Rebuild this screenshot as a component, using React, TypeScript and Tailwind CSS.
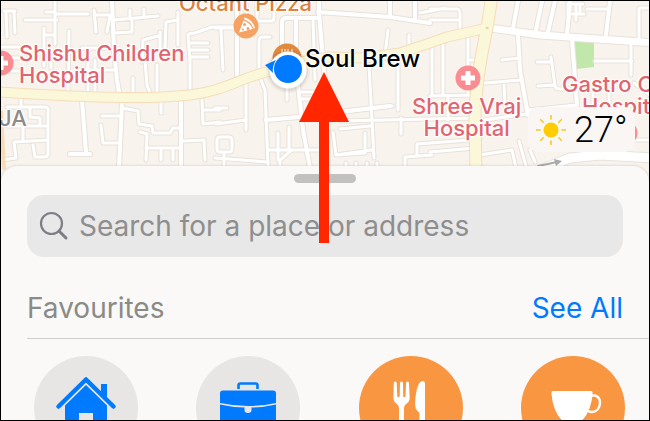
import type { ReactNode } from "react";

const minorRoads = [
  "M4 11H15M6 11L7 37M14 11L15 33M1 47H19M1 71H18M1 58H26",
  "M25 20H57M55 1V44M46 12H55M57 14H88M44 28V66M44 35H55M69 31L68 92M51 60V68",
  "M94 10L96 32M94 15H110L107 32M130 17V10M144 17V9M114 20L158 16M114 33L132 32V20",
  "M142 62L143 40L158 36M160 32V48M145 60L147 85L150 93M157 65V92M133 78V93",
  "M178 12V45M165 48L166 22L178 20M190 92V60L188 35Q188 33 195 33L212 27H237",
  "M190 43H208M190 50H208M190 57H208M80 70H116M88 62V93M95 93V60M82 48H104",
  "M21 98V105M30 108V117L40 118V126M7 107H45Q49 107 48 112V155Q47 157 45 157H35L33 145M8 126H46M23 127V140M48 140L14 142L16 158L1 160",
  "M102 116H122M120 143H103L101 125M122 108L138 111L139 124L152 126L153 133H170L173 128H181M140 132L147 134L146 160M146 148H180M161 149V160M173 149V160M161 100V113",
  "M183 141L204 140L205 160M202 100L203 124L220 122M203 110H220M217 140Q217 137 220 137H229Q232 137 232 140V149Q232 152 229 152H220Q217 152 217 149ZM224 152V166",
  "M215 28H237M221 30L223 70M246 78V130M257 3V18Q257 21 260 21H271Q274 21 274 18V3M246 18V3",
  "M270 37H262Q259 37 259 42V75L265 90L268 166M287 85V100M300 92H322M300 99H320M313 20L315 80",
  "M216 124L245 120M215 108H227M215 158L268 162M278 133V160M289 127V150M268 150H325M280 166V160L292 150",
  "M388 30L385 55M409 35V58M398 63V110M369 65L374 158M340 112L392 106M265 120L300 117",
  "M340 121L475 118M401 118V134M340 129L370 126M333 132L336 155L372 150M336 155L365 153V133",
  "M346 168V163M356 168V163M367 168V163M377 168V163M405 168V157L432 155M417 155V144L470 140",
  "M420 13L445 8M430 20H460M430 9H457Q460 9 460 14V30M443 40V95M432 45V95M468 37V92M468 60H478M430 96L475 95",
  "M572 4H583M572 14H584M576 4V20M587 9H608M568 14V3M639 40V8H650M580 4V14",
  "M502 60L520 58M484 83L522 80M504 85L505 105M484 120L527 114M595 61H632M631 44V75",
  "M537 62H552M551 57L555 86Q556 89 560 89L572 89M538 86L555 85M528 110L577 105M593 90V105M609 90V105M634 83L650 95",
  "M448 98V120M430 152L475 148M480 155L512 150L516 168M519 141L526 166M470 140L480 138M530 150L535 162M582 152V157M620 140H650",
];

const streets = [
  "M112 1L114 50L117 80L119 92M82 100L86 152M70 154H90M122 103L119 168M181 100V168",
  "M237 3V75M319 1V13L323 60L325 80M318 12L390 17L430 23M390 17V1M415 20V1",
  "M282 50V22Q282 18 286 18H318M296 20V50M298 85L303 130L310 168M266 120L320 115M340 112L390 106",
  "M518 1L513 28M542 1L536 30M555 1L548 32M570 3L567 34M610 1L606 35M518 35L520 70L528 115M572 40L577 105",
];

function RoadMap() {
  return (
    <svg
      viewBox="1 1 648 185"
      preserveAspectRatio="xMidYMin slice"
      className="block h-full w-full"
      fill="none"
      strokeLinecap="round"
      strokeLinejoin="round"
      aria-hidden="true"
    >
      <rect x="1" y="1" width="648" height="185" fill="#f8f3ec" />
      <path d="M574 40H594V67L576 69Z" fill="#c1e7ab" />
      <g stroke="#e7e2da">
        {minorRoads.map((d) => <path key={d} d={d} strokeWidth="5" />)}
        {streets.map((d) => <path key={d} d={d} strokeWidth="6" />)}
        <path d="M490 28L540 35L655 43" strokeWidth="9" />
        <path d="M540 170L570 158L600 155L655 158" strokeWidth="11" />
      </g>
      <g stroke="#fff">
        {minorRoads.map((d) => <path key={d} d={d} strokeWidth="3" />)}
        {streets.map((d) => <path key={d} d={d} strokeWidth="4" />)}
        <path d="M490 28L540 35L655 43" strokeWidth="7" />
        <path d="M540 170L570 158L600 155L655 158" strokeWidth="9" />
      </g>
      <g stroke="#f6dcb8">
        <path d="M-3 92C60 95 130 101 190 95C225 91 240 78 270 71L300 62L330 57L365 58L400 53L430 43L447 37L487 28" strokeWidth="11" />
        <path d="M492 -4L487 28C480 60 475 90 475 120L476 172" strokeWidth="13" />
        <path d="M1 112L4 168" strokeWidth="4" />
      </g>
      <g stroke="#fbf8da">
        <path d="M-3 92C60 95 130 101 190 95C225 91 240 78 270 71L300 62L330 57L365 58L400 53L430 43L447 37L487 28" strokeWidth="9" />
        <path d="M492 -4L487 28C480 60 475 90 475 120L476 172" strokeWidth="11" />
      </g>
      <circle cx="487" cy="28" r="1" stroke="#eccb9c" />
      <path d="M538 166L557 162" stroke="#aaa" strokeWidth="2" />
      <path d="M554 159L562 161L556 166Z" fill="#aaa" />
    </svg>
  );
}

function HospitalPin({ className }: { className: string }) {
  return (
    <svg viewBox="0 0 26 26" className={`absolute size-[26px] ${className}`} aria-hidden="true">
      <circle cx="13" cy="13" r="12.5" fill="#fb8c92" />
      <path d="M10.5 6h5v4.500h4.500v5h-4.500v4.500h-5v-4.500H6v-5h4.500z" fill="#fff" />
    </svg>
  );
}

const halo =
  "[text-shadow:0_0_2px_#fff,1px_1px_1px_#fff,-1px_-1px_1px_#fff,1px_-1px_1px_#fff,-1px_1px_1px_#fff]";

function MapLabel({ className, children }: { className: string; children: ReactNode }) {
  return (
    <p className={`absolute whitespace-nowrap text-[22px] leading-[22px] font-medium ${halo} ${className}`}>
      {children}
    </p>
  );
}

function Weather() {
  return (
    <div className="absolute top-[106px] right-[14px] flex h-[45px] w-[107px] items-center gap-2 rounded-[10px] bg-[#f9f6f3] pl-2">
      <svg viewBox="0 0 30 30" className="size-[30px] shrink-0" aria-hidden="true">
        <circle cx="15" cy="15" r="7.500" fill="#fc0" />
        <path
          d="M15 0.500V4M15 26V29.500M0.500 15H4M26 15H29.500M4.700 4.700L7.200 7.200M22.800 22.800L25.300 25.300M4.700 25.300L7.200 22.800M22.800 7.200L25.300 4.700"
          stroke="#fcc81c"
          strokeWidth="1.600"
          strokeLinecap="round"
        />
      </svg>
      <span className="font-[Roboto] text-[36px] leading-[44px] font-light text-black">27°</span>
    </div>
  );
}

function HomeIcon() {
  return (
    <svg viewBox="0 0 104 104" className="size-full" fill="#007aff" aria-hidden="true">
      <path d="M67 28h6v17l-6-6z" />
      <path d="M24.500 50.500L52 23.500L79.500 50.500" fill="none" stroke="#007aff" strokeWidth="4.500" strokeLinecap="round" strokeLinejoin="round" />
      <path d="M31 49.500L52 29L73 49.500V78H59V57H45V78H31z" />
    </svg>
  );
}

function BriefcaseIcon() {
  return (
    <svg viewBox="0 0 104 104" className="size-full" fill="#007aff" aria-hidden="true">
      <path d="M42.500 33V29.500Q42.500 27.500 44.500 27.500H59.500Q61.500 27.500 61.500 29.500V33" fill="none" stroke="#007aff" strokeWidth="2.600" />
      <path d="M27 34.500h50q3 0 3 3v9.500Q52 53 24 47v-9.500q0-3 3-3z" />
      <path d="M24 48.500Q36 51.300 48.500 51.600V54q0 3 3.500 3t3.500-3v-2.400Q68 51.300 80 48.500V74q0 3-3 3H27q-3 0-3-3z" />
    </svg>
  );
}

function ForkKnifeIcon() {
  return (
    <svg viewBox="0 0 104 104" className="size-full" fill="#fff" aria-hidden="true">
      <path d="M36.200 25.500q1.400 0 1.500 1.500l.6 13q.1 1.200 1.200 1.200t1.200-1.200L41 27q.1-1.500 1.500-1.500T44 27l.2 13q.1 1.200 1.200 1.200t1.100-1.200l.6-13q.1-1.500 1.400-1.500 1.400 0 1.500 1.500l.7 14.500q.1 4-3 6-2.700 1.700-2.700 4.500V80h-5V52q0-2.800-2.700-4.500-3-2-2.900-6L34.800 27q.1-1.500 1.400-1.500z" />
      <path d="M64 25q2 0 2 2.500V80h-5.500V58q0-1.500-2-3-2.500-2-2.300-6C56.500 37 58.500 25 64 25z" />
    </svg>
  );
}

function CupIcon() {
  return (
    <svg viewBox="0 0 104 104" className="size-full" fill="#fff" aria-hidden="true">
      <path d="M32 35h38q1.700 0 1.600 2-1 17.500-10.600 27.500Q56 69 51 69t-10-4.500Q31.500 54.500 30.400 37q-.1-2 1.600-2z" />
      <path d="M70 40.500Q72 39 74 39.500Q79 41 79 47Q78.500 55.500 71 56Q68.500 56 67 55" fill="none" stroke="#fff" strokeWidth="2.400" />
    </svg>
  );
}

const favourites = [
  { label: "Home", tone: "bg-[#e7e6e4]", icon: <HomeIcon /> },
  { label: "Work", tone: "bg-[#e7e6e4]", icon: <BriefcaseIcon /> },
  { label: "Restaurants", tone: "bg-[#f99642]", icon: <ForkKnifeIcon /> },
  { label: "Coffee", tone: "bg-[#f99642]", icon: <CupIcon /> },
];

export default function App() {
  return (
    <main className="relative h-screen w-full overflow-hidden border border-black bg-[#faf9f7] font-[Inter,sans-serif]">
      <section aria-label="Map" className="relative h-[185px] overflow-hidden">
        <RoadMap />
        <MapLabel className="-top-[9px] left-[178px] text-[#dd813c]">Octant Pizza</MapLabel>
        <MapLabel className="top-[41px] left-[18px] text-[#e0656f]">
          Shishu Children
          <br />
          Hospital
        </MapLabel>
        <MapLabel className="top-[106px] -left-[2px] text-[#8f8b88]">JA</MapLabel>
        <MapLabel className="top-[94px] left-[411px] text-center text-[#e0656f]">
          Shree Vraj
          <br />
          Hospital
        </MapLabel>
        <MapLabel className="top-[72px] left-[561px] text-[#e0656f]">
          Gastro C
          <br />
          <span className="pl-5">Hospital</span>
        </MapLabel>
        <HospitalPin className="top-[49px] -left-[13px]" />
        <HospitalPin className="top-[64px] left-[454px]" />
        <HospitalPin className="top-[119px] left-[611px]" />
        <svg viewBox="0 0 26 26" className="absolute top-[12px] left-[232px] size-[26px]" aria-hidden="true">
          <circle cx="13" cy="13" r="12.500" fill="#f6a263" />
          <path d="M11.500 4.500Q20 7 22 15L20.500 15.500Q18 8.500 11 6.300z" fill="#fff" />
          <path d="M10.500 7.500Q17 9.500 19.500 16L6 19.500z" fill="#fff" />
          <circle cx="11.500" cy="11.500" r="1.500" fill="#f6a263" />
          <circle cx="15" cy="15.500" r="1.500" fill="#f6a263" />
          <circle cx="10" cy="16.500" r="1" fill="#f6a263" />
        </svg>
        <svg viewBox="0 0 60 60" className="absolute top-[39px] left-[257px] size-[60px] overflow-visible" aria-hidden="true">
          <circle cx="29" cy="18" r="14.500" fill="#e08a40" />
          <path d="M24 9v5M27 9v5M30 9v5M34 9v5" stroke="#f8dcc0" strokeWidth="1.500" />
          <circle cx="30" cy="31" r="22" fill="#000" opacity=".04" />
          <circle cx="30" cy="31" r="20" fill="#000" opacity=".06" />
          <circle cx="30" cy="30" r="18.500" fill="#fff" />
          <path d="M7 25L18 20Q14 26 15 33z" fill="#007aff" />
          <circle cx="30" cy="29" r="14" fill="#007aff" />
        </svg>
        <p className={`absolute top-[44px] left-[304px] text-[24px] leading-[28px] font-medium whitespace-nowrap text-black ${halo}`}>
          Soul Brew
        </p>
        <Weather />
      </section>

      <section className="relative -mt-5 rounded-t-[16px] bg-[#faf9f7] pt-2 shadow-[0_0_3px_rgba(0,0,0,0.18)]">
        <div className="mx-auto h-[9px] w-[62px] rounded-full bg-[#c2c1c0]" />
        <label className="mx-[26px] mt-3 flex h-[62px] items-center gap-[10px] rounded-[17px] bg-[#e9e8e8] px-3">
          <svg viewBox="0 0 30 30" className="size-[30px] shrink-0" fill="none" stroke="#7d7d84" aria-hidden="true">
            <circle cx="12.500" cy="12.500" r="10.500" strokeWidth="2.200" />
            <path d="M20 20L27 27" strokeWidth="3" strokeLinecap="round" />
          </svg>
          <input
            type="text"
            aria-label="Search"
            placeholder="Search for a place or address"
            className="min-w-0 flex-1 bg-transparent text-[28px] leading-[36px] text-[#3c3c43] outline-none placeholder:text-[#8e8e8f]"
          />
        </label>
        <div className="ml-[26px] flex items-center justify-between border-b border-[#cfcecc] pt-[33px] pr-[26px] pb-3 text-[28px] leading-[36px]">
          <h2 className="text-[#8a8a86]">Favourites</h2>
          <a href="#favourites" className="text-[#007aff]">See All</a>
        </div>
        <div id="favourites" className="flex justify-between pt-[17px] pr-6 pl-[33px]">
          {favourites.map(({ label, tone, icon }) => (
            <button key={label} type="button" aria-label={label} className={`size-[104px] shrink-0 rounded-full ${tone}`}>
              {icon}
            </button>
          ))}
        </div>
      </section>

      <svg viewBox="0 0 50 171" className="absolute top-[71px] left-1/2 -ml-[26px] h-[171px] w-[50px]" fill="#ff2600" aria-hidden="true">
        <path d="M25 0L50 50H30V171H20V50H0z" />
      </svg>
    </main>
  );
}
